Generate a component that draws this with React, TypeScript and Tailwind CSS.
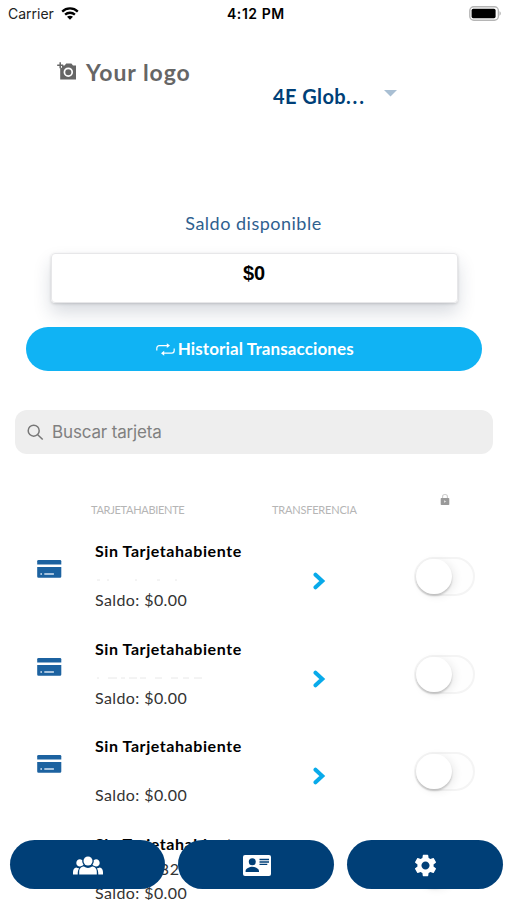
import { MdSettings } from "react-icons/md";

type Row = {
  id: number;
  number?: string;
  trace?: string;
};

const rows: Row[] = [
  { id: 1, trace: "M2 1h3M12 1h2M40 1h2M62 1h3M80 1h2" },
  { id: 2, trace: "M2 1h2M13 1h9M26 1h4M34 1h8M45 1h6M60 1h7M76 1h7M88 1h6M99 1h8" },
  { id: 3 },
  { id: 4, number: "5062 2332" },
];

const WifiIcon = () => (
  <svg width="18" height="13" viewBox="0 0 18 13" fill="none" stroke="#000" strokeWidth="2.3">
    <path d="M1.2 4.6C5.6.4 12.4.4 16.8 4.6" />
    <path d="M4.1 7.7c2.8-2.6 7-2.6 9.8 0" />
    <path d="M6 9.8c1.7-1.5 4.3-1.5 6 0l-3 3z" fill="#000" stroke="none" />
  </svg>
);

const BatteryIcon = () => (
  <svg width="32" height="15" viewBox="0 0 32 15">
    <rect x=".8" y=".8" width="28.6" height="13.4" rx="4" fill="#fff" stroke="#b5b5b5" strokeWidth="1.4" />
    <rect x="2.6" y="2.8" width="24" height="9.4" rx="1.6" fill="#000" />
    <path d="M30.6 5.3c1.4.6 1.4 3.8 0 4.4z" fill="#999" />
  </svg>
);

const CameraIcon = () => (
  <svg width="20" height="18" viewBox="0 0 20 18" className="mt-[4px]">
    <path d="M3.200 5.800h1.800V3.400h2.600l1.600-1.800h5.200l1.600 1.800h3v14H3.200z" fill="#666" />
    <circle cx="11.300" cy="10.200" r="3.900" fill="none" stroke="#fff" strokeWidth="1.700" />
    <path d="M3.200.2v6M.2 3.200h6" stroke="#666" strokeWidth="1.500" />
  </svg>
);

const RepeatIcon = () => (
  <svg width="19" height="13" viewBox="0 0 19 13" fill="none" stroke="#fff" strokeWidth="1.2">
    <path d="M.8 7.4V5.2c0-1.6.9-2.6 2.5-2.6h8.4" />
    <path d="M18.2 5.4v2.2c0 1.6-.9 2.6-2.5 2.6H7.3" />
    <path d="M10.8.2l3.2 2.4-3.2 2.4zM8.2 7.7L5 10.2l3.2 2.5z" fill="#fff" stroke="none" />
  </svg>
);

const SearchIcon = () => (
  <svg width="17" height="17" viewBox="0 0 17 17" fill="none" stroke="#777" strokeWidth="1.5">
    <circle cx="6.7" cy="6.7" r="5.5" />
    <path d="M10.7 10.7l5 4.8" />
  </svg>
);

const LockIcon = () => (
  <svg width="10" height="13" viewBox="0 0 10 13">
    <path d="M2.6 5.5V3.4c0-2.6 4.8-2.6 4.8 0v2.1" fill="none" stroke="#ccc" strokeWidth="1.1" />
    <rect x=".7" y="5" width="8.6" height="7" rx=".8" fill="#999" />
    <path d="M4 7.2l2.4 1.3L4 9.8z" fill="#ddd" />
  </svg>
);

const CardIcon = () => (
  <svg width="25" height="18" viewBox="0 0 25 18">
    <path d="M1.5 0h21.5q1.3 0 1.3 1.3v3.2H.2V1.3Q.2 0 1.5 0z" fill="#1c62a0" />
    <path d="M.2 7h24.1v9.4q0 1.3-1.3 1.3H1.500Q.2 17.700.2 16.400z" fill="#1c62a0" />
    <path d="M3.400 14h1.600M7.300 14h9.600" stroke="#d5e4f2" strokeWidth="1.500" />
  </svg>
);

const ChevronIcon = () => (
  <svg width="13" height="18" viewBox="0 0 13 18" fill="none" stroke="#08aaea" strokeWidth="4" strokeLinecap="round">
    <path d="M2.500 2.700L9.300 9l-6.800 6.300" strokeLinejoin="miter" />
  </svg>
);

const PeopleIcon = () => (
  <svg width="30" height="19" viewBox="0 0 30 19" fill="#fff">
    <circle cx="15" cy="5" r="4.500" />
    <path d="M6.200 18.500v-2.700c0-3 2-5.200 4.700-5.200 2.400 1.700 5.800 1.700 8.200 0 2.700 0 4.700 2.200 4.700 5.200v2.700z" />
    <path d="M9.300 4.200C6.700 2 3.300 3.800 3.300 7c0 3 3.300 4.700 5.800 2.800 1-.6 1.300-1 1.400-1.300-1-1.200-1.500-2.700-1.200-4.300z" />
    <path d="M20.700 4.200C23.300 2 26.700 3.800 26.700 7c0 3-3.300 4.700-5.800 2.800-1-.6-1.300-1-1.400-1.300 1-1.200 1.500-2.700 1.200-4.300z" />
    <path d="M0 18.500v-2.200c0-2.600 1.200-4.400 3.300-4.800 1 .7 2 .9 2.900.7-1.100 1.500-1.500 3.200-1.500 6.300z" />
    <path d="M30 18.500v-2.200c0-2.600-1.200-4.400-3.300-4.800-1 .7-2 .9-2.900.7 1.100 1.500 1.500 3.200 1.500 6.300z" />
  </svg>
);

const ContactIcon = () => (
  <svg width="28" height="21" viewBox="0 0 28 21">
    <rect width="28" height="21" rx="2" fill="#fff" />
    <circle cx="9.300" cy="6.800" r="3.500" fill="#003f77" />
    <path d="M2.600 17v-1c0-2.600 4-4.200 6.700-4.200S16 13.400 16 16v1z" fill="#003f77" />
    <path d="M16.500 4.500H26M16.500 7H26M16.500 9.300h7.800" stroke="#003f77" strokeWidth="1.300" />
  </svg>
);

const Toggle = () => (
  <div className="h-[39px] w-[61px] rounded-full border-2 border-[#f4f4f4] bg-[#fefefe]">
    <div className="h-[35px] w-[36px] rounded-full bg-white shadow-[0_2px_2px_rgba(0,0,0,0.18),3px_2px_8px_rgba(0,0,0,0.08)]" />
  </div>
);

const CardRow = ({ row }: { row: Row }) => (
  <div className="flex h-[97.7px] shrink-0">
    <div className="w-[95px] pt-[21px] pl-[37px]">
      <CardIcon />
    </div>
    <div className="w-[217.5px] whitespace-nowrap text-[#333]">
      <p className="h-[24px] text-[16px] leading-[24px] font-bold tracking-[0.57px] text-black">
        Sin Tarjetahabiente
      </p>
      <div className="h-[27px] text-[16px] leading-[25px] tracking-[0.7px]">
        {row.number}
        {row.trace && (
          <svg width="110" height="18" viewBox="0 -16 110 18" fill="none" stroke="#e8e8e8" strokeWidth="1">
            <path d={row.trace} />
          </svg>
        )}
      </div>
      <p className="text-[16px] leading-[20px] tracking-[0.4px]">Saldo: $0.00</p>
    </div>
    <div className="w-[101px] pt-[33px]">
      <ChevronIcon />
    </div>
    <div className="pt-[18px]">
      <Toggle />
    </div>
  </div>
);

const BottomNav = () => (
  <nav className="absolute top-[840px] left-[9.5px] flex h-[49px] gap-[13px]">
    {[<PeopleIcon />, <ContactIcon />, <MdSettings size={27} />].map((icon, i) => (
      <button
        key={i}
        className="flex w-[155.7px] items-center justify-center rounded-full bg-[#003f77] pt-[1px] pl-[1px] text-white"
      >
        {icon}
      </button>
    ))}
  </nav>
);

export default function App() {
  return (
    <div className="relative flex h-[900px] w-[507px] flex-col overflow-hidden bg-white font-['Lato',sans-serif]">
      <header className="flex h-[27px] shrink-0 items-center font-['Inter',sans-serif] text-[14px] text-[#222]">
        <div className="flex w-[227px] items-center gap-[7px] pl-[8px]">
          <span>Carrier</span>
          <WifiIcon />
        </div>
        <span className="flex-1 font-semibold tracking-[0.55px] text-black">4:12 PM</span>
        <div className="pr-[6px]">
          <BatteryIcon />
        </div>
      </header>

      <section className="flex h-[183px] shrink-0 pl-[57px]">
        <div className="flex w-[216px] gap-[9px] pt-[31px] text-[#666]">
          <CameraIcon />
          <span className="text-[23px] leading-[29px] font-bold tracking-[0.95px] whitespace-nowrap">
            Your logo
          </span>
        </div>
        <div className="flex w-[124px] justify-between pt-[55px] text-[#003f77]">
          <span className="text-[20px] leading-[28px] font-bold tracking-[0.4px] whitespace-nowrap">
            4E Glob<span className="tracking-[1.8px]">...</span>
          </span>
          <svg width="13" height="7" viewBox="0 0 13 7" className="mt-[8px]">
            <path d="M0 0h13L6.500 6.500z" fill="#a9bfd3" />
          </svg>
        </div>
      </section>

      <h1 className="h-[43px] shrink-0 text-center text-[18px] leading-[26px] tracking-[0.5px] text-[#2e608f]">
        Saldo disponible
      </h1>
      <div className="ml-[50.5px] flex h-[50px] w-[407px] shrink-0 justify-center rounded-[4px] border border-[#e7e7e9] pt-[7px] font-['Liberation_Sans',sans-serif] text-[20px] leading-[24px] font-bold text-black shadow-[0_10px_18px_rgba(30,50,80,0.17),0_1px_3px_rgba(0,0,0,0.16)]">
        $0
      </div>
      <button className="mt-[24px] ml-[26px] flex h-[44px] w-[455.5px] shrink-0 items-center justify-center gap-[3px] rounded-full bg-[#10b3f4] pl-[2px] text-[17px] font-bold tracking-[0.12px] text-white">
        <RepeatIcon />
        Historial Transacciones
      </button>

      <div className="mt-[39px] ml-[15px] flex h-[44px] w-[477.5px] shrink-0 items-center gap-[8px] rounded-[12px] bg-[#eee] pl-[12px] font-['Inter',sans-serif] text-[17px] tracking-[-0.15px] text-[#808080]">
        <SearchIcon />
        <span className="pt-[2px]">Buscar tarjeta</span>
      </div>

      <div className="flex h-[85px] shrink-0 pt-[39px] pl-[91px] text-[11px] text-[#b5b5b5]">
        <span className="w-[181px] pt-[9px] tracking-[-0.3px]">TARJETAHABIENTE</span>
        <span className="w-[168px] pt-[9px] tracking-[-0.2px]">TRANSFERENCIA</span>
        <LockIcon />
      </div>

      {rows.map((row) => (
        <CardRow key={row.id} row={row} />
      ))}

      <BottomNav />
    </div>
  );
}
